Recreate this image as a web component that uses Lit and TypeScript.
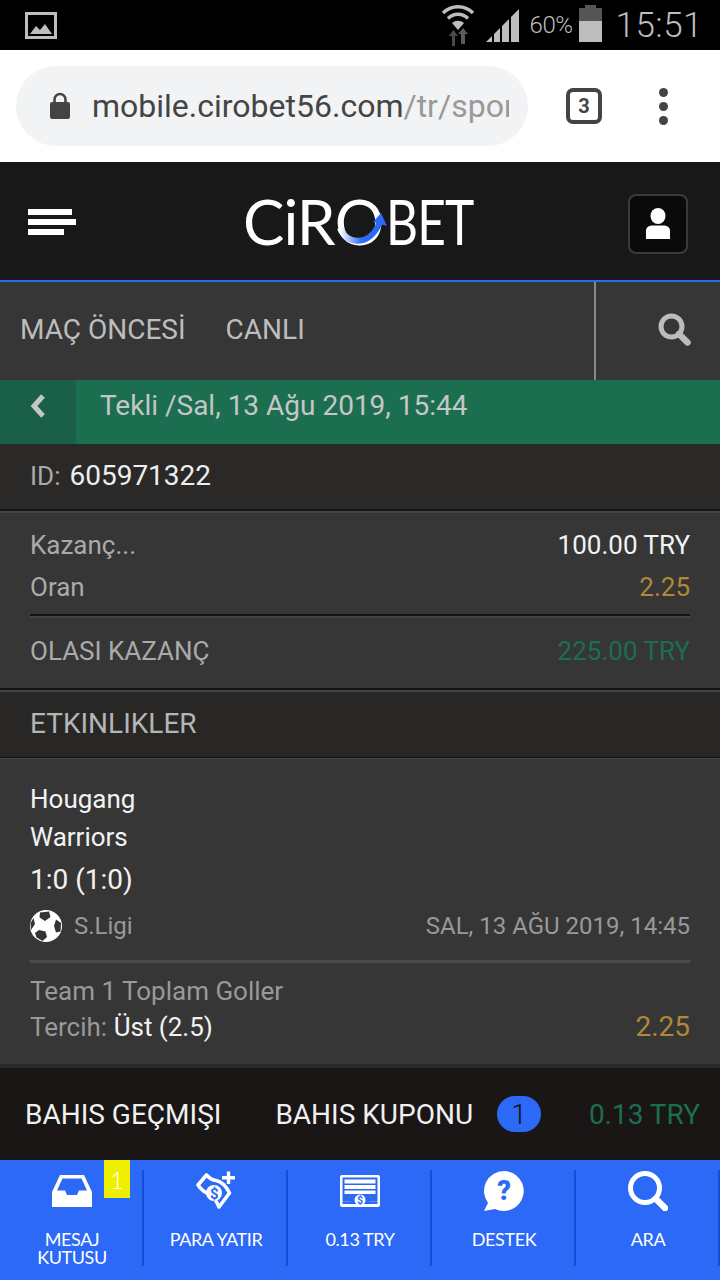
import { LitElement, html, css, svg } from "lit";
import { customElement } from "lit/decorators.js";

const wifi = svg`<svg width="34" height="44" viewBox="0 0 34 44"><g fill="none" stroke="#bdbdbd" stroke-width="3.4"><path d="M2 10 A21 21 0 0 1 32 10"/><path d="M7 15.500 A14 14 0 0 1 27 15.500"/></g><path d="M11 20 A9 9 0 0 1 23 20 L17 27Z" fill="#bdbdbd"/><path d="M11 43V33H7.500L12.500 27L17 33H14V43Z" fill="#4a4a4a"/><path d="M20 41V31H17L22 25L27 31H24V41Z" fill="#5a5a5a"/></svg>`;
const signal = svg`<svg width="33" height="33" viewBox="0 0 33 33" fill="#bdbdbd"><path d="M0 33L6 27V33Z"/><path d="M8 25L14 19V33H8Z"/><path d="M16 17L23 10V33H16Z"/><path d="M25 8L33 0V33H25Z"/></svg>`;
const lock = svg`<svg width="20" height="28" viewBox="0 0 20 28"><path d="M4.500 12V7.500a5.500 5.500 0 0 1 11 0V12" fill="none" stroke="#444" stroke-width="2.600"/><rect y="10" width="20" height="17" rx="2" fill="#444"/></svg>`;
const ball = svg`<svg width="32" height="32" viewBox="0 0 32 32"><circle cx="16" cy="16" r="16" fill="#fff"/><path d="M10 2.500L19 1.500L20.500 7L15 11L9.500 7.500Z M26 9.500L31 13L30.500 21.500L26 22.500L24 16Z M9 20L15.500 21.500L17 27L12.500 31L6.500 27.500L5 23Z M3.500 8L5 14L1 20L.5 13Z" fill="#333"/></svg>`;
const search = svg`<svg width="33" height="33" viewBox="0 0 33 33"><circle cx="13.500" cy="13.500" r="10.500" fill="none" stroke="#bcbcbc" stroke-width="5"/><path d="M21 21L29.500 29.500" stroke="#bcbcbc" stroke-width="6.500" stroke-linecap="round"/></svg>`;
const person = svg`<svg width="24" height="32" viewBox="0 0 24 32" fill="#fff"><ellipse cx="12" cy="8" rx="7.500" ry="8"/><path d="M0 31V23C0 19 3 17.500 7 17.500H17C21 17.500 24 19 24 23V31Z"/></svg>`;
const inbox = svg`<svg width="40" height="32" viewBox="0 0 40 32" fill="#fff"><path d="M8 0H32L40 17V32H0V17ZM10.500 3.500L5 15.500H13L15 20H25L27 15.500H35L29.500 3.500Z" fill-rule="evenodd"/></svg>`;
const money = svg`<svg width="40" height="40" viewBox="0 0 40 40"><path d="M2 14L10.500 4Q15 9 20 9.500Q28 11 33.500 22L23 36Q19 26 12 22.500Q6 20 2 14Z" fill="none" stroke="#fff" stroke-width="3.600" stroke-linejoin="round"/><circle cx="18" cy="22" r="8" fill="#fff"/><text x="18" y="27.500" font-family="Roboto" font-weight="700" font-size="15" text-anchor="middle" fill="#2b69f6">$</text><path d="M26 6.700H39M32.500 .5V13" stroke="#fff" stroke-width="3.400"/></svg>`;
const bill = svg`<svg width="40" height="32" viewBox="0 0 40 32"><rect width="40" height="32" rx="2" fill="#fff"/><rect x="2.500" y="2.500" width="35" height="24" fill="#2b69f6"/><path d="M4.500 4.500H35.500V8.500H4.500ZM4.500 10H35.500V14H4.500ZM4.500 15.500H35.500V19H4.500Z" fill="#fff"/><path d="M2.500 26.500H10L12 25H28L30 26.500H37.500V29H2.500Z" fill="#2b69f6"/><circle cx="20" cy="25" r="5.500" fill="#fff"/><text x="20" y="29" font-family="Roboto" font-weight="700" font-size="10" text-anchor="middle" fill="#2b69f6">$</text></svg>`;
const help = svg`<svg width="40" height="40" viewBox="0 0 40 40"><path d="M20 0A20 20 0 1 1 11 38L0 40L4 32A20 20 0 0 1 20 0Z" fill="#fff"/><text x="20" y="29" font-family="Roboto" font-weight="900" font-size="27" text-anchor="middle" fill="#2b69f6">?</text></svg>`;
const find = svg`<svg width="40" height="40" viewBox="0 0 40 40"><circle cx="17" cy="17" r="14.500" fill="none" stroke="#fff" stroke-width="5"/><path d="M28 28L37 37" stroke="#fff" stroke-width="6.500" stroke-linecap="round"/></svg>`;

@customElement("app-root")
export class AppRoot extends LitElement {
  static styles = css`
    :host { display: block; width: 720px; height: 1280px; overflow: hidden; background: #363636; font-family: Roboto, sans-serif; font-size: 26px; color: #bbb; }
    .status { height: 50px; background: #000; display: flex; align-items: center; padding: 0 17px 0 25px; box-sizing: border-box; color: #bdbdbd; }
    .pic { width: 32px; height: 27px; }
    .sright { margin-left: auto; display: flex; align-items: center; }
    .sright svg { flex: none; }
    .pct { font-size: 24px; margin: 0 7px 0 11px; font-weight: 300; letter-spacing: -.5px; }
    .gapw { width: 11px; }
    .batt { width: 23px; height: 34px; position: relative; background: #bdbdbd; }
    .batt-top { height: 13px; background: #555; }
    .batt::before { content: ""; position: absolute; top: -3px; left: 6px; width: 11px; height: 4px; background: #555; }
    .time { font-size: 35px; font-weight: 300; margin-left: 13px; letter-spacing: .5px; }
    .urlbar { height: 112px; background: #fff; display: flex; align-items: center; padding-left: 16px; }
    .pill { width: 512px; height: 80px; border-radius: 40px; background: #f1f3f4; display: flex; align-items: center; padding-left: 34px; box-sizing: border-box; }
    .url { margin-left: 22px; width: 417px; overflow: hidden; white-space: nowrap; font-size: 32px; color: #444; }
    .url span { color: #999; }
    .tabs { margin-left: 38px; width: 36px; height: 36px; box-sizing: border-box; border: 4px solid #444; border-radius: 7px; display: flex; align-items: center; justify-content: center; font-size: 20px; font-weight: 700; color: #444; }
    .dots { margin-left: 57px; display: flex; flex-direction: column; gap: 5px; }
    .dots i { width: 9px; height: 9px; border-radius: 50%; background: #444; }
    .head { height: 118px; background: #181818; border-bottom: 2px solid #2b69f6; display: flex; align-items: center; padding: 0 32px 0 28px; justify-content: space-between; position: relative; }
    .burger { display: flex; flex-direction: column; gap: 4px; margin-top: 2px; }
    .burger i { height: 6px; background: #fff; display: block; }
    .logo { display: flex; align-items: center; font-family: Lato, sans-serif; font-size: 62px; line-height: 62px; color: #fff; letter-spacing: -1px; position: absolute; left: 243px; top: 28px; }
    .logo .lt { font-weight: 400; letter-spacing: -1px; margin-left: 3px; display: inline-block; transform: scaleX(.8); transform-origin: left center; }
    .o { position: relative; display: inline-block; }
    .o svg { position: absolute; left: -1px; top: 8px; }
    .user { width: 60px; height: 60px; box-sizing: border-box; border: 2px solid #3a3a3a; border-radius: 8px; background: #0a0a0a; display: flex; align-items: center; justify-content: center; margin-top: 6px; }
    .nav { height: 98px; display: flex; align-items: stretch; padding-left: 20px; font-size: 28px; }
    .nav a { display: flex; align-items: center; margin-right: 40px; padding-bottom: 4px; color: #bdbdbd; }
    .navsearch { margin-left: auto; width: 126px; border-left: 2px solid #888; display: flex; align-items: center; padding: 0 0 4px 62px; box-sizing: border-box; }
    .green { height: 64px; background: #1c6e50; display: flex; color: #c6c6c6; font-size: 28px; }
    .back { width: 76px; background: #1a5f47; display: flex; justify-content: center; padding-top: 13px; box-sizing: border-box; }
    .green .t { margin-left: 24px; line-height: 52px; }
    .idrow { height: 65px; background: #2a2928; display: flex; align-items: center; padding: 0 30px 2px; box-sizing: border-box; color: #aaa; font-size: 26px; }
    .idrow b { font-weight: 400; color: #eee; margin-left: 9px; font-size: 28px; }
    .rule { height: 2px; background: #141414; border-bottom: 2px solid #444; }
    .sum { padding: 11px 30px 0; height: 175px; box-sizing: border-box; }
    .r { display: flex; justify-content: space-between; height: 42px; align-items: center; color: #aaa; }
    .w { color: #f2f2f2; }
    .o2 { color: #b08838; }
    .g { color: #1c6e50; }
    .line { height: 2px; background: #151515; border-bottom: 2px solid #444; margin: 6px 0 12px; }
    .title { height: 65px; background: #282726; display: flex; align-items: center; padding: 0 30px 3px; box-sizing: border-box; color: #b5b5b5; font-size: 28px; }
    .ev { padding: 21px 30px 0; height: 305px; box-sizing: border-box; }
    .team { color: #f2f2f2; line-height: 38px; height: 38px; }
    .score { color: #f2f2f2; line-height: 40px; margin-top: 4px; height: 40px; font-size: 28px; }
    .meta { display: flex; align-items: center; margin-top: 10px; height: 32px; color: #999; font-size: 24px; }
    .meta .n { margin-left: 12px; }
    .meta .d { margin-left: auto; }
    .hr { height: 3px; background: #4a4a4a; margin: 18px 0 10px; }
    .market { line-height: 36px; height: 36px; color: #999; }
    .pick { display: flex; justify-content: space-between; line-height: 36px; height: 36px; color: #999; }
    .pick b { font-weight: 400; color: #f2f2f2; }
    .pick .o2 { font-size: 28px; color: #b08838; }
    .foot { height: 96px; box-sizing: border-box; border-top: 4px solid #2a2a2a; background: #191615; display: flex; align-items: center; padding: 0 20px 0 25px; color: #f0f0f0; font-size: 28px; }
    .foot .k { margin-left: 54px; }
    .pillb { margin-left: 24px; width: 44px; height: 36px; border-radius: 18px; background: #2b69f6; color: #111; display: flex; align-items: center; justify-content: center; font-size: 28px; font-weight: 300; }
    .foot .m { margin-left: auto; color: #1c6e50; }
    .tabbar { height: 120px; background: #2b69f6; display: grid; grid-template-columns: repeat(5, 144px); position: relative; }
    .cell { position: relative; display: flex; flex-direction: column; align-items: center; padding-top: 11px; box-sizing: border-box; color: #fff; font-family: Lato, sans-serif; font-size: 18px; line-height: 18px; text-align: center; letter-spacing: -.4px; }
    .cell:not(:last-child)::after { content: ""; position: absolute; right: 0; top: 10px; height: 96px; width: 2px; background: #0f4fd8; }
    .ic { height: 40px; display: flex; align-items: center; justify-content: center; }
    .lb { margin-top: 19px; }
    .badge { position: absolute; left: 104px; top: 0; width: 26px; height: 38px; background: #eef000; color: #fff; display: flex; align-items: center; justify-content: center; font-family: Lato, sans-serif; font-size: 24px; font-weight: 300; }
  `;

  render() {
    return html`
      <div class="status">
        <svg class="pic" viewBox="0 0 32 27"><rect x="1.500" y="1.500" width="29" height="24" fill="none" stroke="#bdbdbd" stroke-width="3"/><path d="M5 22L11 14L15 18L20 12L27 22Z" fill="#bdbdbd"/></svg>
        <div class="sright">
          ${wifi}
          <span class="gapw"></span>
          ${signal}
          <span class="pct">60%</span>
          <div class="batt"><div class="batt-top"></div></div>
          <span class="time">15:51</span>
        </div>
      </div>
      <div class="urlbar">
        <div class="pill">${lock}<div class="url">mobile.cirobet56.com<span>/tr/sports</span></div></div>
        <div class="tabs">3</div>
        <div class="dots"><i></i><i></i><i></i></div>
      </div>
      <div class="head">
        <div class="burger"><i style="width:44px"></i><i style="width:48px"></i><i style="width:36px"></i></div>
        <div class="logo"><span>CiR</span><span class="o">O<svg width="62" height="50" viewBox="0 0 62 50"><defs><linearGradient id="lg" x1="0" x2="1" y1="0" y2="0"><stop offset="0" stop-color="#fff"/><stop offset=".55" stop-color="#2b69f6"/></linearGradient></defs><path d="M6 30C12 47 36 49 46 24" fill="none" stroke="url(#lg)" stroke-width="6"/><path d="M39 24L47 15L53 28Z" fill="#2b69f6"/></svg></span><span class="lt">BET</span></div>
        <div class="user">${person}</div>
      </div>
      <div class="nav">
        <a>MAÇ ÖNCESİ</a><a>CANLI</a>
        <div class="navsearch">${search}</div>
      </div>
      <div class="green">
        <div class="back"><svg width="18" height="26" viewBox="0 0 18 26"><path d="M14 3L5 13L14 23" fill="none" stroke="#c6c6c6" stroke-width="5"/></svg></div>
        <div class="t">Tekli /Sal, 13 Ağu 2019, 15:44</div>
      </div>
      <div class="idrow">ID: <b>605971322</b></div>
      <div class="rule"></div>
      <div class="sum">
        <div class="r"><span>Kazanç...</span><span class="w">100.00 TRY</span></div>
        <div class="r"><span>Oran</span><span class="o2">2.25</span></div>
        <div class="line"></div>
        <div class="r"><span>OLASI KAZANÇ</span><span class="g">225.00 TRY</span></div>
      </div>
      <div class="rule"></div>
      <div class="title">ETKINLIKLER</div>
      <div class="rule" style="height:1px;border-bottom-width:1px"></div>
      <div class="ev">
        <div class="team">Hougang</div>
        <div class="team">Warriors</div>
        <div class="score">1:0 (1:0)</div>
        <div class="meta">${ball}<span class="n">S.Ligi</span><span class="d">SAL, 13 AĞU 2019, 14:45</span></div>
        <div class="hr"></div>
        <div class="market">Team 1 Toplam Goller</div>
        <div class="pick"><span>Tercih: <b>Üst (2.5)</b></span><span class="o2">2.25</span></div>
      </div>
      <div class="foot">
        <span>BAHIS GEÇMIŞI</span><span class="k">BAHIS KUPONU</span><span class="pillb">1</span><span class="m">0.13 TRY</span>
      </div>
      <div class="tabbar">
        <div class="cell"><div class="ic">${inbox}</div><div class="lb">MESAJ<br>KUTUSU</div></div>
        <div class="cell"><div class="ic">${money}</div><div class="lb">PARA YATIR</div></div>
        <div class="cell"><div class="ic">${bill}</div><div class="lb">0.13 TRY</div></div>
        <div class="cell"><div class="ic">${help}</div><div class="lb">DESTEK</div></div>
        <div class="cell"><div class="ic">${find}</div><div class="lb">ARA</div></div>
        <div class="badge">1</div>
      </div>
    `;
  }
}
